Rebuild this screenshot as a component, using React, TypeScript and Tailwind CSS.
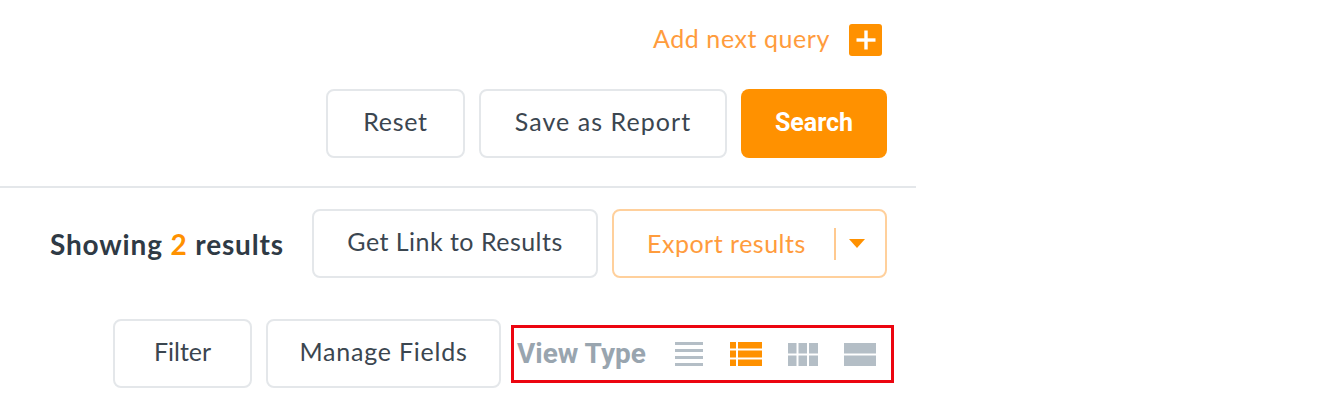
const quicksand = "font-['Lato','Noto_Sans',sans-serif]"

function Outline({ children, className }: { children: React.ReactNode; className: string }) {
  return (
    <button className={`h-[69px] rounded-lg border-2 border-[#e4e7ea] bg-white pb-[3px] text-[25px] text-[#3b4650] ${quicksand} ${className}`}>
      {children}
    </button>
  )
}

function ListIcon() {
  return (
    <svg width="28" height="24" viewBox="0 0 28 24" fill="#b4bec6" className="block">
      <rect x="0" y="0" width="28" height="3" />
      <rect x="0" y="7" width="28" height="3" />
      <rect x="0" y="14" width="28" height="3" />
      <rect x="0" y="21" width="28" height="3" />
    </svg>
  )
}

function DetailIcon() {
  return (
    <svg width="32" height="24" viewBox="0 0 32 24" fill="#ff9100" className="block">
      <rect x="0" y="0" width="6" height="6.500" />
      <rect x="8" y="0" width="24" height="6.500" />
      <rect x="0" y="8.500" width="6" height="7" />
      <rect x="8" y="8.500" width="24" height="7" />
      <rect x="0" y="17.500" width="6" height="6.500" />
      <rect x="8" y="17.500" width="24" height="6.500" />
    </svg>
  )
}

function GridIcon() {
  return (
    <svg width="30" height="23" viewBox="0 0 30 23" fill="#b4bec6" className="block">
      <rect x="0" y="0" width="8.500" height="10.500" />
      <rect x="10.500" y="0" width="8.500" height="10.500" />
      <rect x="21" y="0" width="9" height="10.500" />
      <rect x="0" y="12.500" width="8.500" height="10.500" />
      <rect x="10.500" y="12.500" width="8.500" height="10.500" />
      <rect x="21" y="12.500" width="9" height="10.500" />
    </svg>
  )
}

function RowsIcon() {
  return (
    <svg width="32" height="23" viewBox="0 0 32 23" fill="#b4bec6" className="block">
      <rect x="0" y="0" width="32" height="10.500" />
      <rect x="0" y="12.500" width="32" height="10.500" />
    </svg>
  )
}

export default function App() {
  return (
    <div className="h-[409px] w-[1344px] overflow-hidden bg-white">
      <div className="w-[916px]">
        <div className="flex h-[89px] items-start justify-end pt-6 pr-[34px]">
          <span className={`mr-[19px] text-[25px] leading-[29px] tracking-[0.57px] text-[#ff9c3d] ${quicksand}`}>Add next query</span>
          <span className="flex h-[32px] w-[33px] items-center justify-center rounded-[3px] bg-[#ff9100]">
            <svg width="20" height="20" viewBox="0 0 20 20" fill="#fff">
              <rect x="8.300" y="0.500" width="3.400" height="19" />
              <rect x="0.500" y="8.300" width="19" height="3.400" />
            </svg>
          </span>
        </div>

        <div className="flex justify-end gap-[14px] pr-[29px]">
          <Outline className="w-[139px] tracking-[0.7px]">Reset</Outline>
          <Outline className="w-[248px] tracking-[1.05px]">Save as Report</Outline>
          <button className="h-[69px] w-[146px] rounded-lg bg-[#ff9100] pb-[2px] font-['Roboto',sans-serif] text-[25px] font-bold text-white">
            Search
          </button>
        </div>

        <div className="mt-7 h-[2px] bg-[#e4e7ea]" />

        <div className="mt-[21px] flex items-center justify-end gap-[14px] pr-[29px]">
          <span className={`mt-[1px] mr-[14px] text-[28px] font-bold tracking-[0.85px] text-[#2f3a45] ${quicksand}`}>
            Showing <span className="text-[#ff9100]">2</span> results
          </span>
          <Outline className="w-[286px] tracking-[0.47px]">Get Link to Results</Outline>
          <button className={`flex h-[69px] w-[275px] items-center rounded-lg border-2 border-[#ffd09c] bg-white pl-[33px] text-[25px] tracking-[0.5px] text-[#ff9c3d] ${quicksand}`}>
            <span>Export results</span>
            <span className="ml-[28px] h-[32px] w-[2px] bg-[#ffc98f]" />
            <span className="ml-[13px] h-0 w-0 border-x-[8px] border-t-[9px] border-x-transparent border-t-[#ff9100]" />
          </button>
        </div>

        <div className="mt-[41px] flex items-center pl-[113px]">
          <Outline className="w-[139px]">Filter</Outline>
          <Outline className="ml-[14px] w-[235px] tracking-[0.77px]">Manage Fields</Outline>
          <div className="mt-[1px] ml-[10px] flex h-[58px] w-[383px] items-center border-[3px] border-[#ec0510] pl-[3px]">
            <span className="font-['Roboto',sans-serif] text-[28px] font-bold text-[#99a5af]">View Type</span>
            <span className="ml-[29px]"><ListIcon /></span>
            <span className="ml-[27px]"><DetailIcon /></span>
            <span className="ml-[26px]"><GridIcon /></span>
            <span className="ml-[26px]"><RowsIcon /></span>
          </div>
        </div>
      </div>
    </div>
  )
}
